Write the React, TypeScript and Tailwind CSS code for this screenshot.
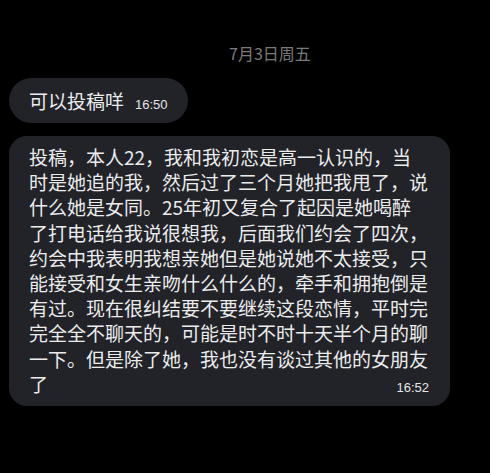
export default function App() {
  const body =
    "投稿，本人22，我和我初恋是高一认识的，当时是她追的我，然后过了三个月她把我甩了，说什么她是女同。25年初又复合了起因是她喝醉了打电话给我说很想我，后面我们约会了四次，约会中我表明我想亲她但是她说她不太接受，只能接受和女生亲吻什么什么的，牵手和拥抱倒是有过。现在很纠结要不要继续这段恋情，平时完完全全不聊天的，可能是时不时十天半个月的聊一下。但是除了她，我也没有谈过其他的女朋友";

  return (
    <div
      className="w-[490px] h-[473px] bg-black overflow-hidden pt-[42px]"
      style={{ fontFamily: '"Noto Sans CJK SC", "Noto Sans", sans-serif' }}
    >
      <div className="pl-[229px] text-[16px] leading-[22px] text-[#7a7a7a]">7月3日周五</div>

      <div className="mt-[14px] pl-[9px] flex flex-col items-start gap-[13px]">
        <div className="flex items-baseline rounded-full bg-[#212328] h-[45px] pl-5 pr-[20px] pt-[10px]">
          <span className="text-[19px] leading-[25px] text-[#ececec]">可以投稿咩</span>
          <span
            className="ml-[11px] text-[13px] font-medium text-[#e6e6e6]"
            style={{ fontFamily: '"Liberation Sans", Arial, sans-serif' }}
          >
            16:50
          </span>
        </div>

        <div className="w-[441px] rounded-[18px] bg-[#212328] pl-5 pr-[21px] pt-2 pb-[9px] text-[#ececec]">
          <p className="text-[19px] leading-[25.2px] break-all">{body}</p>
          <div className="flex items-baseline justify-between">
            <span className="text-[19px] leading-[25.2px]">了</span>
            <span
              className="text-[13px] font-medium text-[#e6e6e6]"
              style={{ fontFamily: '"Liberation Sans", Arial, sans-serif' }}
            >
              16:52
            </span>
          </div>
        </div>
      </div>
    </div>
  );
}
